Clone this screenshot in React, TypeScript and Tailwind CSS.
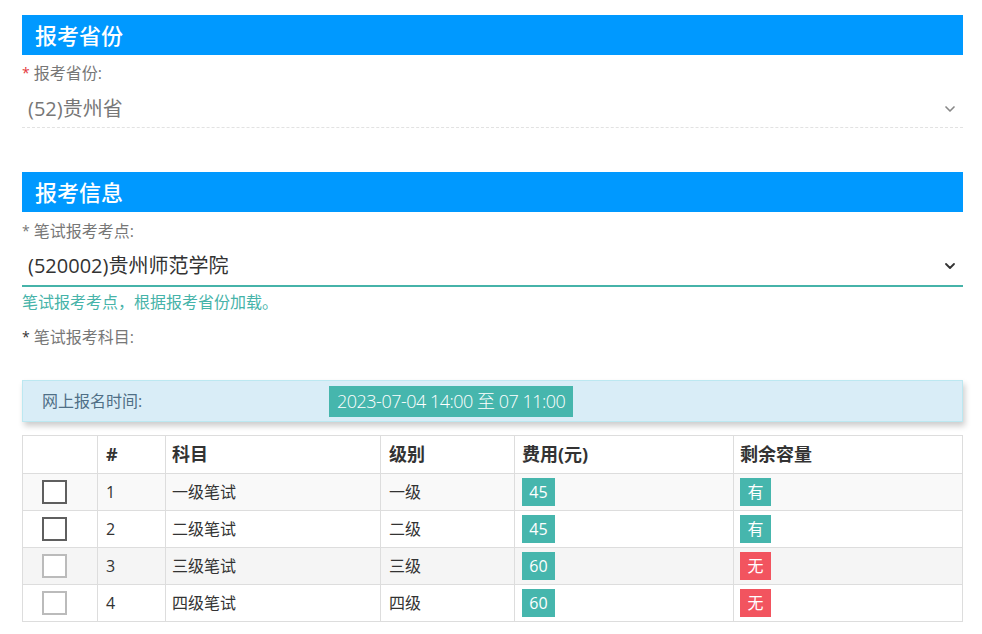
import { ChevronDown } from 'lucide-react';

const subjects = [
  { id: 1, name: '一级笔试', level: '一级', fee: 45, left: '有', enabled: true, bg: 'bg-[#f9f9f9]' },
  { id: 2, name: '二级笔试', level: '二级', fee: 45, left: '有', enabled: true, bg: 'bg-white' },
  { id: 3, name: '三级笔试', level: '三级', fee: 60, left: '无', enabled: false, bg: 'bg-[#f5f5f5]' },
  { id: 4, name: '四级笔试', level: '四级', fee: 60, left: '无', enabled: false, bg: 'bg-white' },
];

function SectionTitle({ children }: { children: string }) {
  return (
    <div className="h-10 bg-[#0099ff] pl-[13px] flex items-center text-[22px] font-medium leading-none text-white">
      {children}
    </div>
  );
}

export default function App() {
  return (
    <div
      className="bg-white min-h-screen pl-[22px] pt-[15px] pb-4"
      style={{ fontFamily: '"Open Sans", "Noto Sans CJK SC", sans-serif' }}
    >
      <div className="w-[941px]">
        {/* 报考省份 */}
        <SectionTitle>报考省份</SectionTitle>
        <div className="mt-2 h-5 flex items-center text-[16px] text-[#777]">
          <span className="text-[#e4393c] mr-1 text-sm">*</span>报考省份:
        </div>
        <div className="h-[37px] mt-[8px] flex items-center justify-between pl-[6px] pr-[5px] border-b border-dashed border-[#e2e2e2]">
          <span className="text-[20px] text-[#777]">(52)贵州省</span>
          <ChevronDown className="w-4 h-4 text-[#888]" strokeWidth={2.5} />
        </div>

        {/* 报考信息 */}
        <div className="mt-[44px]">
          <SectionTitle>报考信息</SectionTitle>
        </div>
        <div className="mt-[9px] h-5 flex items-center text-[16px] text-[#777]">
          <span className="mr-1 text-sm">*</span>笔试报考考点:
        </div>
        <div className="h-[40px] mt-[6px] flex items-center justify-between pl-[6px] pr-[5px] border-b-2 border-[#46b3a9]">
          <span className="text-[20px] text-[#333]">(520002)贵州师范学院</span>
          <ChevronDown className="w-4 h-4 text-[#333]" strokeWidth={2.75} />
        </div>
        <div className="mt-[5px] h-5 flex items-center text-[16px] text-[#46b3a9]">
          笔试报考考点，根据报考省份加载。
        </div>
        <div className="mt-[15px] h-5 flex items-center text-[16px] text-[#777]">
          <span className="text-[#333] mr-1 text-sm">*</span>笔试报考科目:
        </div>

        {/* 网上报名时间 */}
        <div className="mt-[33px] h-[42px] bg-[#d9edf7] border border-[#bce8f1] shadow-[2px_4px_6px_rgba(0,0,0,0.2)] flex items-center pl-[19px]">
          <span className="w-[287px] text-[16px] text-[#4f6f86]">网上报名时间:</span>
          <span className="h-[31px] px-2 bg-[#46b6ad] text-white text-[18px] font-light tracking-[-0.5px] flex items-center">
            2023-07-04 14:00 至 07 11:00
          </span>
        </div>

        {/* 科目表 */}
        <table className="mt-[13px] w-full border-collapse border border-[#ddd] text-[#333]">
          <thead>
            <tr className="h-[38px] text-[18px] font-bold text-left">
              <th className="w-[75px] border border-[#ddd]"></th>
              <th className="w-[68px] border border-[#ddd] pl-2">#</th>
              <th className="w-[215px] border border-[#ddd] pl-[6px]">科目</th>
              <th className="w-[134px] border border-[#ddd] pl-2">级别</th>
              <th className="w-[219px] border border-[#ddd] pl-[7px]">费用(元)</th>
              <th className="border border-[#ddd] pl-[6px]">剩余容量</th>
            </tr>
          </thead>
          <tbody>
            {subjects.map((s) => (
              <tr key={s.id} className={`h-[37px] text-[16px] leading-5 ${s.bg}`}>
                <td className="border border-[#ddd] pl-[19px] py-0">
                  <div
                    className={`w-[25px] h-6 border-2 bg-white ${s.enabled ? 'border-[#5f5f5f]' : 'border-[#bbb]'}`}
                  />
                </td>
                <td className="border border-[#ddd] pl-2">{s.id}</td>
                <td className="border border-[#ddd] pl-[6px]">{s.name}</td>
                <td className="border border-[#ddd] pl-2">{s.level}</td>
                <td className="border border-[#ddd] pl-[7px]">
                  <span className="inline-flex items-center justify-center w-[33px] h-7 bg-[#46b6ad] text-white text-[16px] align-middle">
                    {s.fee}
                  </span>
                </td>
                <td className="border border-[#ddd] pl-[6px]">
                  <span
                    className={`inline-flex items-center justify-center w-[31px] h-7 text-white text-[16px] align-middle ${
                      s.left === '有' ? 'bg-[#46b6ad]' : 'bg-[#f2545f]'
                    }`}
                  >
                    {s.left}
                  </span>
                </td>
              </tr>
            ))}
          </tbody>
        </table>
      </div>
    </div>
  );
}
